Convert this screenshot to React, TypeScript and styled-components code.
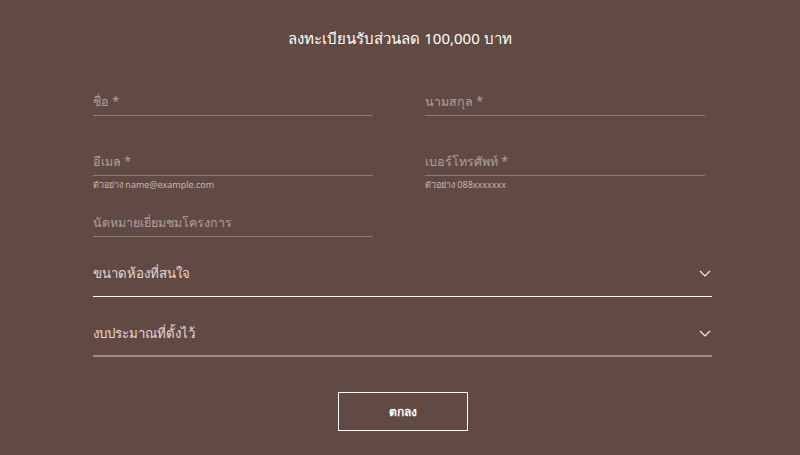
import styled, { createGlobalStyle } from "styled-components"

const GlobalStyle = createGlobalStyle`
	html, body {
		margin: 0;
		padding: 0;
		background: #624a44;
	}
	body {
		font-family: "Noto Sans", "Liberation Sans", sans-serif;
	}
`

const Page = styled.div`
	width: 800px;
	height: 455px;
	display: flex;
	flex-direction: column;
	padding: 28px 0 0 93px;
	box-sizing: border-box;
	background: #624a44;
	overflow: hidden;
`

const Title = styled.h1`
	margin: 0 0 0 -93px;
	align-self: center;
	font-size: 15px;
	line-height: 20px;
	font-weight: 400;
	color: #ffffff;
`

const Form = styled.form`
	width: 619px;
	margin-top: 40px;
	display: flex;
	flex-direction: column;
`

const FieldGrid = styled.div`
	display: grid;
	grid-template-columns: 280px 280px;
	grid-template-rows: 60px 61px auto;
	column-gap: 52px;
`

const Field = styled.div`
	display: flex;
	flex-direction: column;
`

const InputLine = styled.div`
	height: 28px;
	box-sizing: border-box;
	padding-top: 1px;
	border-bottom: 1px solid #8d7b76;
`

const Label = styled.span`
	font-size: 12.5px;
	line-height: 20px;
	color: #ada09c;
`

const Helper = styled.span`
	margin-top: 3px;
	font-size: 9px;
	line-height: 12px;
	color: #c2b5b1;
`

const SelectRow = styled.div<{ $active?: boolean }>`
	margin-top: 20px;
	height: 40px;
	box-sizing: border-box;
	padding-top: 6px;
	display: flex;
	justify-content: space-between;
	align-items: flex-start;
	border-bottom: ${(p) => (p.$active ? "1px solid #ffffff" : "2px solid #9c8c87")};
	cursor: pointer;
`

const SelectLabel = styled.span`
	font-size: 13.3px;
	line-height: 20px;
	color: #e2d8d5;
`

const Chevron = styled.svg`
	width: 14px;
	height: 20px;
`

const SubmitButton = styled.button`
	align-self: center;
	margin-top: 35px;
	width: 130px;
	height: 39px;
	background: transparent;
	border: 1px solid #ffffff;
	color: #ffffff;
	font-family: inherit;
	font-size: 12px;
	font-weight: 700;
	cursor: pointer;
`

const ChevronIcon = () => (
	<Chevron viewBox="0 0 14 20" fill="none">
		<path d="M2 8 L7 13 L12 8" stroke="#f2ecea" strokeWidth="1.2" />
	</Chevron>
)

const fields = [
	{ label: "ชื่อ *" },
	{ label: "นามสกุล *" },
	{ label: "อีเมล *", helper: "ตัวอย่าง name@example.com" },
	{ label: "เบอร์โทรศัพท์ *", helper: "ตัวอย่าง 088xxxxxxx" },
	{ label: "นัดหมายเยี่ยมชมโครงการ" },
]

const App = () => {
	return (
		<>
			<GlobalStyle />
			<Page>
				<Title>ลงทะเบียนรับส่วนลด 100,000 บาท</Title>
				<Form onSubmit={(e) => e.preventDefault()}>
					<FieldGrid>
						{fields.map((f) => (
							<Field key={f.label}>
								<InputLine>
									<Label>{f.label}</Label>
								</InputLine>
								{f.helper && <Helper>{f.helper}</Helper>}
							</Field>
						))}
					</FieldGrid>
					<SelectRow $active>
						<SelectLabel>ขนาดห้องที่สนใจ</SelectLabel>
						<ChevronIcon />
					</SelectRow>
					<SelectRow>
						<SelectLabel>งบประมาณที่ตั้งไว้</SelectLabel>
						<ChevronIcon />
					</SelectRow>
					<SubmitButton type="submit">ตกลง</SubmitButton>
				</Form>
			</Page>
		</>
	)
}

export default App
